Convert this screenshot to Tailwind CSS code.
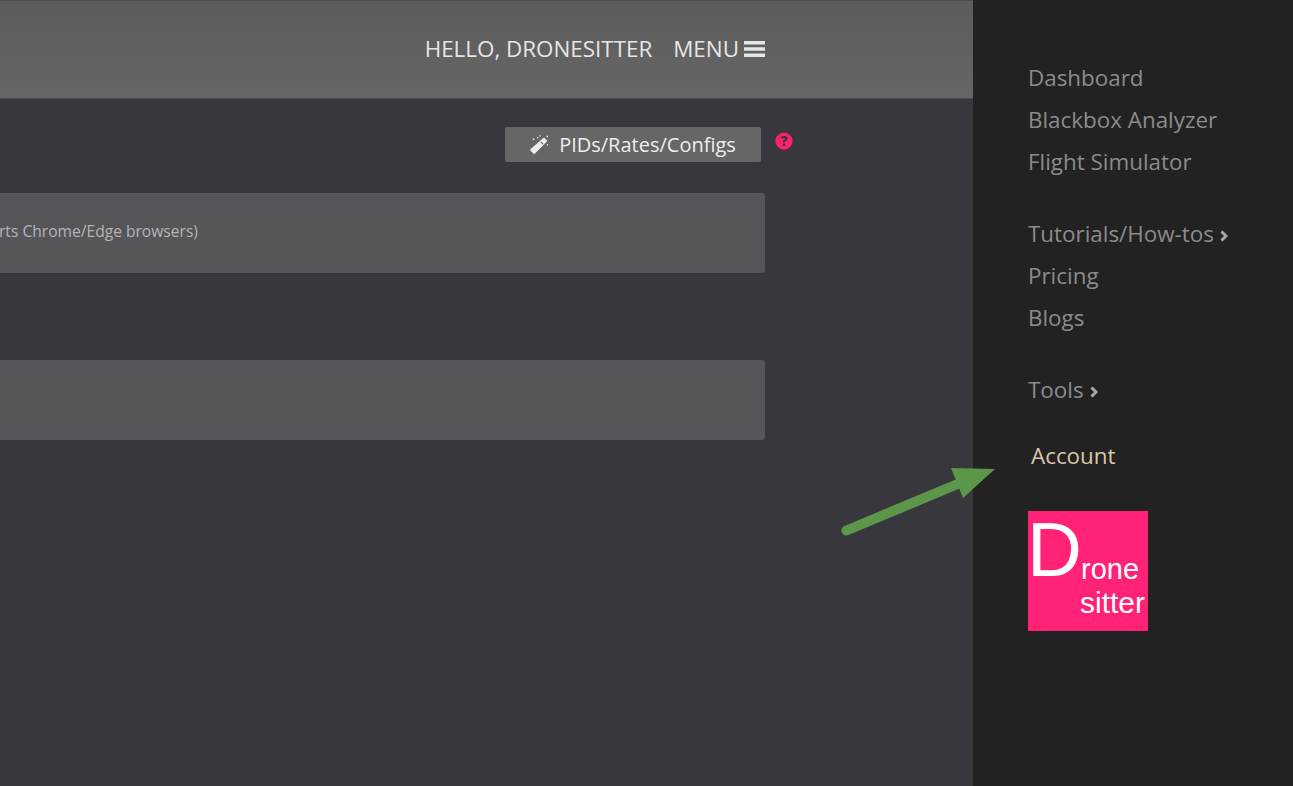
<!DOCTYPE html>
<html>
<head>
<meta charset="utf-8">
<script src="https://cdn.jsdelivr.net/npm/@tailwindcss/browser@4"></script>
</head>
<body class="m-0 overflow-hidden">
<div class="relative flex w-[1293px] h-[786px] overflow-hidden bg-[#38373d] font-['Open_Sans',sans-serif]">
  <main class="w-[973px] flex flex-col shrink-0">
    <header class="h-[99px] shrink-0 flex items-center justify-end pr-[208px] pb-[2px] bg-gradient-to-b from-[#5c5c5c] to-[#666666] border-t border-t-[#4c4c4c] border-b border-b-[#4a4a4e] text-[#e6e6e6] text-[22.4px]">
      <span>HELLO, DRONESITTER</span>
      <span class="ml-[21px]">MENU</span>
      <svg class="ml-[5px]" width="21" height="16" viewBox="0 0 21 16"><path fill="#e6e6e6" d="M0 0h21v3.6H0zM0 6.2h21v3.6H0zM0 12.4h21V16H0z"/></svg>
    </header>
    <div class="flex justify-end items-start pt-[28px] pr-[212px]">
      <button class="w-[256px] h-[35px] flex items-center justify-center gap-[10px] rounded-[2px] bg-[#666666] text-[#eeeeee] text-[20px]">
        <svg width="19" height="19" viewBox="0 0 19 19"><path fill="#eeeeee" d="M14 2.6l3.4 3.4L5 18.4a1.3 1.3 0 0 1-1.8 0l-2.6-2.6a1.3 1.3 0 0 1 0-1.8z"/><path fill="#666666" d="M10.4 7.2l.8-.8 2.4 2.4-.8.8z"/><path fill="#eeeeee" d="M7 2h1.4v1.2H7zM2.8 3.5h1.6v1.6H2.8zM9.5.2h1.2v1.2H9.5zM16.6.8h1.4v1.4h-1.4zM17 9.3h1.2v1.2H17z"/></svg>
        <span>PIDs/Rates/Configs</span>
      </button>
      <svg class="ml-[14px] mt-[5px] mr-[-32px]" width="18" height="18" viewBox="0 0 18 18"><circle cx="9" cy="9" r="8.6" fill="#ff1f6f"/><text x="9" y="14" text-anchor="middle" font-family="'Open Sans',sans-serif" font-weight="800" font-size="14" fill="#38373d">?</text></svg>
    </div>
    <div class="mt-[31px] mr-[208px] h-[80px] flex items-center rounded-r-[3px] bg-[#56555a] text-[#b4b4b6] text-[15.6px]">
      <span class="-ml-[1px] -mt-[2px]">rts Chrome/Edge browsers)</span>
    </div>
    <div class="mt-[87px] mr-[208px] h-[80px] rounded-r-[3px] bg-[#56555a]"></div>
  </main>
  <aside class="w-[320px] shrink-0 bg-[#222222] pl-[55px] pt-[57px] text-[#8b8b8b] text-[22.4px]">
    <nav class="flex flex-col">
      <a class="h-[42px] leading-[42px]">Dashboard</a>
      <a class="h-[42px] leading-[42px]">Blackbox Analyzer</a>
      <a class="h-[42px] leading-[42px]">Flight Simulator</a>
      <a class="h-[42px] leading-[42px] mt-[30px] flex items-center">Tutorials/How-tos
        <svg class="ml-[6px] mt-[4px]" width="8" height="12" viewBox="0 0 8 12"><path d="M1.5 1.5L6 6l-4.5 4.5" fill="none" stroke="#a8a8a8" stroke-width="3"/></svg></a>
      <a class="h-[42px] leading-[42px]">Pricing</a>
      <a class="h-[42px] leading-[42px]">Blogs</a>
      <a class="h-[42px] leading-[42px] mt-[30px] flex items-center">Tools
        <svg class="ml-[6px] mt-[4px]" width="8" height="12" viewBox="0 0 8 12"><path d="M1.5 1.5L6 6l-4.5 4.5" fill="none" stroke="#a8a8a8" stroke-width="3"/></svg></a>
      <a class="h-[42px] leading-[42px] mt-[24px] ml-[3px] text-[#d9c8a5]">Account</a>
    </nav>
    <div class="relative mt-[34px] w-[120px] h-[120px] bg-[#ff2277] text-white font-['Liberation_Sans',sans-serif]">
      <span class="absolute left-[-1px] top-[1px] text-[76px] leading-[76px]">D</span>
      <span class="absolute left-[53px] top-[42px] text-[29px] leading-[32px]">rone</span>
      <span class="absolute left-[52px] top-[76px] text-[30px] leading-[32px]">sitter</span>
    </div>
  </aside>
  <svg class="absolute left-[835px] top-[460px]" width="165" height="80" viewBox="0 0 165 80"><path d="M11.5 70.5L125 23" stroke="#5c9649" stroke-width="10" stroke-linecap="round" fill="none"/><path d="M116 8L160 9L128 38Z" fill="#5c9649"/></svg>
</div>
</body>
</html>
